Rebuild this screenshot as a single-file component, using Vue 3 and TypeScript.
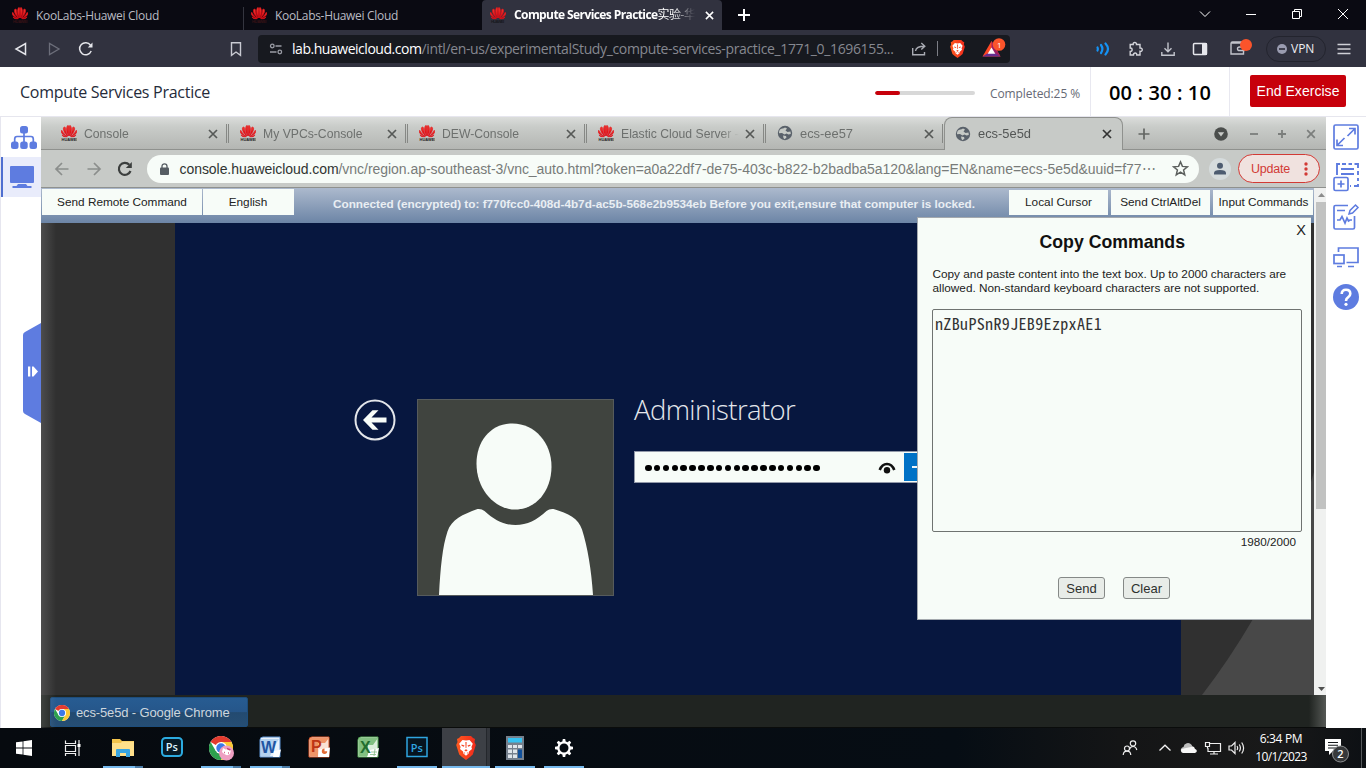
<script setup lang="ts">
interface RemoteTab {
  title: string
  brand: boolean
}
interface TaskItem {
  id: string
  running: boolean
  active?: boolean
}

const remoteTabs: RemoteTab[] = [
  { title: 'Console', brand: true },
  { title: 'My VPCs-Console', brand: true },
  { title: 'DEW-Console', brand: true },
  { title: 'Elastic Cloud Server -', brand: true },
  { title: 'ecs-ee57', brand: false },
]

const taskItems: TaskItem[] = [
  { id: 'explorer', running: true },
  { id: 'ps-new', running: false },
  { id: 'chrome', running: true },
  { id: 'word', running: true },
  { id: 'ppt', running: false },
  { id: 'excel', running: false },
  { id: 'ps-old', running: true },
  { id: 'brave', running: true, active: true },
  { id: 'calc', running: true },
  { id: 'settings', running: true },
]

const petals: string[] = [
  'M7.700 11C5.300 8 4.800 3 6.600 .6Q7.600 .2 7.800 1.600Z',
  'M8.300 11C10.700 8 11.200 3 9.400 .6Q8.400 .2 8.200 1.600Z',
  'M7 11C4.500 9.500 1.800 5.500 2.500 2.700Q3.200 1.600 4.300 2.400C4.600 6 5.500 8.500 7 11Z',
  'M9 11C11.500 9.500 14.200 5.500 13.500 2.700Q12.800 1.600 11.700 2.400C11.400 6 10.500 8.500 9 11Z',
  'M6.400 11.300C3 10.500 0 8.500 .1 6.200Q.2 5.300 1 5.400C2 7.800 4 9.800 6.400 11.300Z',
  'M9.600 11.300C13 10.500 16 8.500 15.900 6.200Q15.800 5.300 15 5.400C14 7.800 12 9.800 9.600 11.300Z',
  'M6.200 11.800C4 12.400 1.700 11.600 1 9.900C2.600 10.800 4.400 11.400 6.200 11.800Z',
  'M9.800 11.800C12 12.400 14.300 11.600 15 9.900C13.400 10.800 11.600 11.400 9.800 11.800Z',
]
const gearTeeth: number[] = [0, 45, 90, 135, 180, 225, 270, 315]
const command = 'nZBuPSnR9JEB9EzpxAE1'
const maxChars = 2000
</script>

<template>
  <svg class="sprite" width="0" height="0" aria-hidden="true">
    <defs>
      <linearGradient id="petal" x1="0" y1="0" x2="0" y2="1">
        <stop offset="0" stop-color="#f23a30" />
        <stop offset="1" stop-color="#dc000f" />
      </linearGradient>
      <linearGradient id="lion" x1="0" y1="0" x2="1" y2="0">
        <stop offset="0" stop-color="#ff5a1f" />
        <stop offset="1" stop-color="#f02a1c" />
      </linearGradient>
    </defs>
    <symbol id="flower" viewBox="0 0 16 12.500">
      <path v-for="d in petals" :key="d" :d="d" stroke="#e0101a" stroke-width=".6" />
    </symbol>
    <symbol id="globe" viewBox="0 0 16 16">
      <circle cx="8" cy="8" r="7.200" fill="#59616a" />
      <path d="M3 4.500C5 3 6 4 8 2.500L10 3.500L8.500 5.500L10.500 7L13.500 6.500L13.800 9L11.500 9.500L9.500 8.500L7.500 9.500L5 8L2 8.300C2 6.500 2.300 5.500 3 4.500Z" fill="#c5c9c5" />
      <path d="M6 10.500L9 11L9.500 12.500L7.500 14.300L6.500 13Z" fill="#c5c9c5" />
    </symbol>
    <symbol id="chrome" viewBox="0 0 24 24">
      <circle cx="12" cy="12" r="12" fill="#fff" />
      <path d="M1.600 6A12 12 0 0 0 12 24L17.200 15L12 12L6.800 15Z" fill="#2da04e" />
      <path d="M22.400 6A12 12 0 0 1 12 24L17.200 15L17 9L12 6Z" fill="#fcc934" />
      <path d="M12 12L1.600 6A12 12 0 0 1 22.400 6H12Z" fill="#e33b2e" />
      <circle cx="12" cy="12" r="6" fill="#fff" />
      <circle cx="12" cy="12" r="4.700" fill="#3d79e8" />
    </symbol>
    <symbol id="brave" viewBox="0 0 20 24">
      <path d="M5 0H15L17 2L19 3L18.500 6L19.800 9L16.800 18.500L14 21L10 24L6 21L3.200 18.500L.2 9L1.500 6L1 3L3 2Z" fill="url(#lion)" />
      <path d="M10 4.500L13.500 4L16.800 7.800L15.400 11L16 13L13 15.500L12.600 17.500L10 19.800L7.400 17.500L7 15.500L4 13L4.600 11L3.200 7.800L6.500 4Z" fill="#fff" />
      <path d="M5.500 8.500L8.500 9.500L7.800 10.700L5.500 9.800ZM14.500 8.500L11.500 9.500L12.200 10.700L14.500 9.800ZM8.300 14.200L10 13.200L11.700 14.200L10 15.500ZM7.600 16L9.200 17L8.500 17.800ZM12.400 16L10.800 17L11.500 17.800ZM9.400 6H10.600L10.400 12H9.600Z" fill="#f5431f" />
    </symbol>
    <symbol id="cross" viewBox="0 0 10 10">
      <path d="M1 1L9 9M9 1L1 9" fill="none" stroke="currentColor" stroke-width="1.700" />
    </symbol>
  </svg>

  <div class="screen">
    <header class="tabstrip">
      <div class="tab">
        <svg class="logo" viewBox="0 0 16 16"><use href="#flower" width="16" height="12.500" fill="url(#petal)" /><text x="1" y="15.700" class="logo-word dim">HUAWEI</text></svg>
        <span>KooLabs-Huawei Cloud</span>
      </div>
      <div class="tab second">
        <svg class="logo" viewBox="0 0 16 16"><use href="#flower" width="16" height="12.500" fill="url(#petal)" /><text x="1" y="15.700" class="logo-word dim">HUAWEI</text></svg>
        <span>KooLabs-Huawei Cloud</span>
      </div>
      <div class="tab current">
        <svg class="logo" viewBox="0 0 16 16"><use href="#flower" width="16" height="12.500" fill="url(#petal)" /><text x="1" y="15.700" class="logo-word">HUAWEI</text></svg>
        <span class="current-title">Compute Services Practice<span class="cjk">实验-华</span></span>
        <svg class="tab-close" viewBox="0 0 10 10"><use href="#cross" /></svg>
      </div>
      <svg class="new-tab" viewBox="0 0 12 12"><path d="M6 0V12M0 6H12" stroke="#fff" stroke-width="2" /></svg>
      <div class="window-controls">
        <svg width="12" height="12" viewBox="0 0 12 12"><path d="M1 3.500L6 8.500L11 3.500" /></svg>
        <svg width="12" height="12" viewBox="0 0 12 12"><path d="M1 6.500H11" /></svg>
        <svg width="12" height="12" viewBox="0 0 12 12"><path d="M1.500 3.500H8.500V10.500H1.500ZM3.500 3.500V1.500H10.500V8.500H8.500" /></svg>
        <svg width="12" height="12" viewBox="0 0 12 12"><path d="M1 1L11 11M11 1L1 11" /></svg>
      </div>
    </header>

    <nav class="toolbar">
      <svg width="16" height="16" viewBox="0 0 16 16" class="ln"><path d="M12.500 2.500V13.500L3 8Z" stroke="#e4e5ea" stroke-width="1.500" /></svg>
      <svg width="16" height="16" viewBox="0 0 16 16" class="ln"><path d="M3.500 2.500V13.500L13 8Z" stroke="#6c6e7a" stroke-width="1.300" /></svg>
      <svg width="16" height="16" viewBox="0 0 16 16" class="ln"><path d="M13.200 10A6 6 0 1 1 12.500 4.200" stroke="#e4e5ea" stroke-width="1.500" /><path d="M14.500 1.500V6.500H9.800Z" fill="#e4e5ea" /></svg>
      <i></i>
      <svg width="16" height="16" viewBox="0 0 16 16" class="ln"><path d="M3.500 1.700H12.500V14.300L8 11L3.500 14.300Z" stroke="#c9cad2" stroke-width="1.400" /></svg>
      <i></i>
      <div class="address">
        <svg class="tune ln" width="14" height="14" viewBox="0 0 14 14"><g stroke="#9a9ca5" stroke-width="1.300"><circle cx="3.300" cy="4" r="1.800" /><path d="M6.500 4H12.500M1 10H7.500" /><circle cx="10.800" cy="10" r="1.800" /></g></svg>
        <span class="host">lab.huaweicloud.com</span><span class="path">/intl/en-us/experimentalStudy_compute-services-practice_1771_0_1696155...</span>
        <svg class="share ln" width="16" height="16" viewBox="0 0 16 16"><path d="M1.700 7V13.700H13.500V11M4.500 10C5 6.500 8 5.200 13.500 5.200M10.300 2L13.800 5.200L10.300 8.400" stroke="#a9abb3" stroke-width="1.400" /></svg>
        <span class="divider"></span>
        <svg class="shield" viewBox="0 0 20 24"><use href="#brave" /></svg>
        <svg class="bat" viewBox="0 0 26 20"><path d="M9.500 3L18.500 18.500H0.500Z" fill="#ff4724" /><path d="M9.500 3L18.500 18.500L9.500 14Z" fill="#9e1f63" /><path d="M.5 18.500H18.500L9.500 13Z" fill="#662d91" /><path d="M9.500 9.500L13.300 15.800H5.700Z" fill="#fff" /><circle cx="17" cy="6.500" r="6.300" fill="#fb542b" /><text x="15" y="10" fill="#fff" class="bat-count">1</text></svg>
      </div>
      <i></i>
      <svg width="16" height="16" viewBox="0 0 16 16" class="ln"><g stroke="#1593f5" stroke-width="2.200" stroke-linecap="round"><path d="M2.500 6.500Q3.300 8 2.500 9.500" /><path d="M6 4Q8.800 8 6 12" /><path d="M10.500 2.500Q15.500 8 10.500 13.500" /></g></svg>
      <svg width="16" height="16" viewBox="0 0 16 16" class="ln"><path d="M2.200 3.500H5.200C4.500 1 9 .6 8.500 3.500H12V7C15 6.500 15 11 12 10.300V14H8.800C9 11.300 5.500 11.300 5.500 14H2.200V10.500C4.800 10.500 4.800 7 2.200 7Z" stroke="#d3d4da" stroke-width="1.400" /></svg>
      <svg width="16" height="16" viewBox="0 0 16 16" class="ln"><path d="M8 1.500V10.500M4.500 7.200L8 10.700L11.500 7.200M1.800 11V14.200H14.200V11" stroke="#c3c5cd" stroke-width="1.400" /></svg>
      <svg width="16" height="16" viewBox="0 0 16 16"><rect x="1.500" y="2.500" width="13" height="11" rx="1" fill="none" stroke="#e6e7ec" stroke-width="1.500" /><path d="M10 2H15V14H10Z" fill="#e6e7ec" /></svg>
      <svg width="26" height="22" viewBox="0 0 26 22" class="ln wallet"><path d="M3.800 6H15.500V17H3V6.500Q3 5 4.500 5H15M16 10H11.500Q9.500 10 9.500 11.800T11.500 13.500H16Z" stroke="#c3c5cd" stroke-width="1.400" /><circle cx="18" cy="8" r="6" fill="#fb542b" /></svg>
      <i></i>
      <div class="vpn"><svg width="10" height="10" viewBox="0 0 10 10"><circle cx="5" cy="5" r="5" fill="#9a9cb0" /><path d="M2 5H8" stroke="#31323f" stroke-width="1.700" /></svg><span>VPN</span></div>
      <svg width="14" height="12" viewBox="0 0 14 12"><path d="M.5 1.500H13.500M.5 6H13.500M.5 10.500H13.500" stroke="#cfd0d6" stroke-width="1.500" /></svg>
    </nav>

    <section class="lab-header">
      <h1>Compute Services Practice</h1>
      <div class="progress"><span class="bar"><b></b></span><span>Completed:25 %</span></div>
      <div class="timer">00 : 30 : 10</div>
      <div class="end"><button>End Exercise</button></div>
    </section>

    <main class="lab">
      <aside class="left">
        <div class="cell"><svg width="28" height="26" viewBox="0 0 28 26"><g fill="#5e7ce0"><rect x="10" y="1" width="8" height="7.500" rx="2.500" /><rect x="1" y="16.500" width="7.500" height="7.500" rx="2.500" /><rect x="10.200" y="16.500" width="7.500" height="7.500" rx="2.500" /><rect x="19.500" y="16.500" width="7.500" height="7.500" rx="2.500" /></g><path d="M14 8V17M4.700 17V14Q4.700 11.500 7 11.500H21Q23.300 11.500 23.300 14V17" fill="none" stroke="#5e7ce0" stroke-width="1.700" /></svg></div>
        <div class="cell on"><svg width="24" height="24" viewBox="0 0 24 24" fill="#5e7ce0"><rect y="1" width="24" height="17" rx="1" /><path d="M8 19H16L17.500 21H21.500V23H2.500V21H6.500Z" /></svg></div>
        <svg class="handle" width="18" height="100" viewBox="0 0 18 100"><path d="M18 0V100L2 91Q0 90 0 88V12Q0 10 2 9Z" fill="#5e7ce0" /><path d="M5 43.500H7.300V53.500H5ZM9 43.500H10.500L15 48.500L10.500 53.500H9Z" fill="#fff" /></svg>
      </aside>

      <section class="remote">
        <div class="r-tabs">
          <div v-for="tab in remoteTabs" :key="tab.title" class="r-tab" :class="{ site: !tab.brand }">
            <svg v-if="tab.brand" class="logo" viewBox="0 0 16 16"><use href="#flower" width="16" height="12.500" fill="url(#petal)" /><text x=".5" y="16" class="logo-word dark">HUAWEI</text></svg>
            <svg v-else class="logo" viewBox="0 0 16 16"><use href="#globe" /></svg>
            <span class="r-title">{{ tab.title }}</span>
            <svg class="r-close" viewBox="0 0 10 10"><use href="#cross" /></svg>
          </div>
          <div class="r-tab site r-current">
            <svg class="logo" viewBox="0 0 16 16"><use href="#globe" /></svg>
            <span class="r-title">ecs-5e5d</span>
            <svg class="r-close" viewBox="0 0 10 10"><use href="#cross" /></svg>
          </div>
          <svg class="r-new" viewBox="0 0 12 12"><path d="M6 .5V11.500M.5 6H11.500" stroke="#636663" stroke-width="1.700" /></svg>
          <div class="r-controls">
            <svg width="14" height="14" viewBox="0 0 14 14"><circle cx="7" cy="7" r="6.800" fill="#4b4e4c" /><path d="M3.800 5.200H10.200L7 9.500Z" fill="#c9cbc8" /></svg>
            <svg width="10" height="10" viewBox="0 0 10 10"><path d="M1 5H9" stroke="#7b7e7c" stroke-width="1.800" /></svg>
            <svg width="10" height="10" viewBox="0 0 10 10"><path d="M1 5H9M5 1V9" stroke="#7b7e7c" stroke-width="1.800" /></svg>
            <svg width="10" height="10" viewBox="0 0 10 10"><path d="M1.200 1.200L8.800 8.800M8.800 1.200L1.200 8.800" stroke="#7b7e7c" stroke-width="1.700" /></svg>
          </div>
        </div>

        <div class="r-bar">
          <svg width="16" height="16" viewBox="0 0 16 16" class="ln"><path d="M14.500 8H2M8 2L2 8L8 14" stroke="#8b8e8c" stroke-width="1.700" /></svg>
          <svg width="16" height="16" viewBox="0 0 16 16" class="ln"><path d="M1.500 8H14M8 2L14 8L8 14" stroke="#8b8e8c" stroke-width="1.700" /></svg>
          <svg width="16" height="16" viewBox="0 0 16 16" class="ln"><path d="M13.500 10A6 6 0 1 1 12.300 3.800" stroke="#3c3f3e" stroke-width="2.200" /><path d="M14.800 1V7H8.800Z" fill="#3c3f3e" /></svg>
          <div class="omni">
            <svg class="lock" viewBox="0 0 9 12"><rect y="4.500" width="9" height="7.500" rx="1" fill="#565d63" /><path d="M2 5V3.300A2.500 2.500 0 0 1 7 3.300V5" fill="none" stroke="#565d63" stroke-width="1.300" /></svg>
            <span class="o-host">console.huaweicloud.com</span><span class="o-path">/vnc/region.ap-southeast-3/vnc_auto.html?token=a0a22df7-de75-403c-b822-b2badba5a120&amp;lang=EN&amp;name=ecs-5e5d&amp;uuid=f77⋯</span>
            <svg class="star ln" viewBox="0 0 16 16"><path d="M8 1.800L9.800 6L14.500 6.400L10.900 9.400L12 14L8 11.500L4 14L5.100 9.400L1.500 6.400L6.200 6Z" stroke="#5c605e" stroke-width="1.400" /></svg>
          </div>
          <svg class="person" viewBox="0 0 22 22"><circle cx="11" cy="11" r="11" fill="#d6dcdd" /><circle cx="11" cy="7.800" r="3" fill="#4d5c70" /><path d="M5 16.500V15Q5 12 11 12T17 15V16.500Z" fill="#4d5c70" /></svg>
          <div class="update"><span>Update</span><svg width="4" height="14" viewBox="0 0 4 14" fill="#d23a35"><circle cx="2" cy="2" r="1.700" /><circle cx="2" cy="7" r="1.700" /><circle cx="2" cy="12" r="1.700" /></svg></div>
        </div>

        <div class="r-page">
          <div class="canvas">
            <div class="vnc">
              <button class="v-send">Send Remote Command</button>
              <button class="v-lang">English</button>
              <p>Connected (encrypted) to: f770fcc0-408d-4b7d-ac5b-568e2b9534eb Before you exit,ensure that computer is locked.</p>
              <button class="v-r">Local Cursor</button>
              <button class="v-r">Send CtrlAltDel</button>
              <button class="v-r">Input Commands</button>
            </div>
            <div class="desk">
              <div class="login">
                <svg class="back" viewBox="0 0 42 42"><circle cx="21" cy="21" r="19.500" fill="none" stroke="#e3e6ea" stroke-width="2" /><path d="M9 21L18.500 11.300H24.500L17.500 18.500H32.500V23.500H17.500L24.500 30.700H18.500Z" fill="#f7fcf8" /></svg>
                <svg class="avatar" viewBox="0 0 197 197"><rect x=".5" y=".5" width="196" height="196" fill="#40443f" stroke="#565b5c" /><path d="M95.500 24.500C118.500 24.500 134.500 44.500 134.500 67.500C134.500 92.500 118.500 110.500 98.500 110.500C77.500 110.500 59.500 90.500 59.500 64.500C59.500 42.500 73.500 24.500 95.500 24.500Z" fill="#f7fcf8" /><path d="M22 196C23.500 168 25.500 147.500 30.500 132.500C34.500 120.500 45.500 115.500 60.500 110Q64.500 109.500 67.500 112C77.500 121 86.500 126 98.500 126C110.500 126 119.500 121 129.500 112Q132.500 109.500 136.500 110C151.500 114.500 161.500 119.500 165 130.500C170.500 147.500 174.500 171.500 176 196Z" fill="#f7fcf8" /></svg>
                <div class="creds">
                  <h2>Administrator</h2>
                  <div class="pwd"><span class="dots"><i v-for="n in command.length" :key="n"></i></span><svg class="eye" viewBox="0 0 18 12"><path d="M1.700 8Q4 2 9 2T16.300 8" fill="none" stroke="#111" stroke-width="2.600" /><circle cx="9" cy="8.300" r="3.200" fill="#111" /></svg><span class="go"><svg width="26" height="26" viewBox="0 0 26 26"><path d="M7 13H19M14 7L20 13L14 19" fill="none" stroke="#eef6fb" stroke-width="2.200" /></svg></span></div>
                </div>
              </div>
              <svg class="hill" viewBox="0 0 133 473"><path d="M133 250Q105 345 72 397Q48 438 21 473H133Z" fill="#484848" /></svg>
            </div>
            <div class="dialog">
              <span class="x">X</span>
              <h3>Copy Commands</h3>
              <p>Copy and paste content into the text box. Up to 2000 characters are<br>allowed. Non-standard keyboard characters are not supported.</p>
              <div class="box">{{ command }}</div>
              <div class="count">{{ maxChars - command.length }}/{{ maxChars }}</div>
              <div class="actions"><button>Send</button><button>Clear</button></div>
            </div>
          </div>
          <div class="scroll"><svg viewBox="0 0 12 14"><path d="M4 9H11L7.500 5Z" fill="#8c8c8c" /></svg><b></b><svg viewBox="0 0 12 14"><path d="M4 6H11L7.500 10Z" fill="#505050" /></svg></div>
        </div>

        <div class="r-task"><div class="r-app"><svg viewBox="0 0 24 24"><use href="#chrome" /></svg><span>ecs-5e5d - Google Chrome</span></div></div>
        <div class="glow"></div>
      </section>

      <aside class="right">
        <svg viewBox="0 0 26 26"><rect x="1" y="1" width="24" height="24" rx="1.500" /><path d="M16 4.500H22V10.500M22 4.500L14.500 12M10 21.500H4V15.500M4 21.500L11.500 14" /></svg>
        <svg viewBox="0 0 26 26"><path d="M4 11V0H7M9 0H13M15.500 0H19M21.500 0H25V4M25 7V11M25 14V17M25 20V22H21M18 22H17M8 5H21M8 10H21" stroke-width="1.900" /><rect x="1" y="13.500" width="14" height="13" rx="1.500" /><path d="M8 16.500V23.500M4.500 20H11.500" /></svg>
        <svg viewBox="0 0 26 26"><path d="M15 1.500H2.500Q1 1.500 1 3V23.500Q1 25 2.500 25H20Q21.500 25 21.500 23.500V12M4 6.500H12M4 16H7L9 12.500L12 19L14 14L15.500 17L17 16H19" /><path d="M16 10L17 6.500L22.500 1L25 3.500L19.500 9Z" stroke-width="1.500" /></svg>
        <svg viewBox="0 0 26 26"><path d="M5.500 8V4H25V18.500H13.500M15 22.500H21M4 22.500H9" /><rect x="1" y="11" width="10" height="8.500" /></svg>
        <svg viewBox="0 0 26 26"><circle cx="13" cy="13" r="13" fill="#5e7ce0" stroke="none" /><path d="M8.700 10Q8.700 5.800 13 5.800T17.300 9.800Q17.300 12 15 13.400Q13 14.600 13 17" stroke="#fff" stroke-width="2.600" /><circle cx="13" cy="20.300" r="1.600" fill="#fff" stroke="none" /></svg>
      </aside>
    </main>

    <footer class="taskbar">
      <div class="slot"><svg width="16" height="16" viewBox="0 0 16 16" fill="#fff"><path d="M0 2.300L6.600 1.400V7.600H0ZM7.400 1.300L16 0V7.600H7.400ZM0 8.400H6.600V14.600L0 13.700ZM7.400 8.400H16V16L7.400 14.700Z" /></svg></div>
      <div class="slot"><svg width="17" height="16" viewBox="0 0 17 16" class="ln"><path d="M1.500 .5V3.500H11.500V.5M1.500 5.500H11.500V11.500H1.500ZM1.500 16V13.500H11.500V16M15 0V16" stroke="#eee" stroke-width="1.200" /><path d="M13.500 4H16.500V7H13.500Z" fill="#fff" /></svg></div>
      <div v-for="t in taskItems" :key="t.id" class="slot" :class="{ running: t.running, active: t.active }">
        <svg v-if="t.id === 'explorer'" width="22" height="20" viewBox="0 0 22 20"><path d="M0 1H8L10 3H22V18H0Z" fill="#f3c44b" /><path d="M0 5L9 5L10 3.500H22V18H0Z" fill="#ffe08a" /><path d="M4 19V12Q4 11 5 11H17Q18 11 18 12V19H14V15H8V19Z" fill="#3aa5e0" /></svg>
        <svg v-else-if="t.id === 'ps-new'" width="22" height="20" viewBox="0 0 22 20" class="raise"><rect x="1" y="1" width="20" height="18" rx="3.500" fill="#071a26" stroke="#2cabe0" stroke-width="2" /><text x="4.700" y="14.300" class="ps">Ps</text></svg>
        <svg v-else-if="t.id === 'chrome'" width="28" height="26" viewBox="0 0 28 26"><use href="#chrome" x="2" y="1" width="24" height="24" /><circle cx="19.500" cy="18" r="7.500" fill="#ee9fc2" /><path d="M15 17L16 13L18.500 14.500L21.500 13.500L24 15L23 19Q19 22 15 17Z" fill="#fff" /><path d="M20 13.500L23.500 15M17 17.500H17.800M21 18H21.800" stroke="#cc3f72" stroke-width="1.500" /></svg>
        <svg v-else-if="t.id === 'word'" width="22" height="22" viewBox="0 0 22 22" class="raise"><path d="M4 1H21V21H1V4Q1 1 4 1Z" fill="#e8f0fa" stroke="#5c94d4" /><path d="M2 3H20L17 8L11 20H2Z" fill="#b4d2f0" /><text x="2" y="17" class="office" fill="#1f55a3">W</text><path d="M15 15L22 13.500L20 21H14Z" fill="#fff" /></svg>
        <svg v-else-if="t.id === 'ppt'" width="22" height="22" viewBox="0 0 22 22" class="raise"><path d="M4 1H21V21H1V4Q1 1 4 1Z" fill="#fae2d4" stroke="#d65325" /><path d="M2 2H21L17 7H10V20H2Z" fill="#ef9467" /><path d="M11 13.500L22 11.500L21 21H10Z" fill="#fff" /><text x="3" y="16" class="office" fill="#bd3514">P</text><path d="M16.500 12.500A2.700 2.700 0 1 0 19.200 15.200H16.500Z" fill="#e36c36" /></svg>
        <svg v-else-if="t.id === 'excel'" width="22" height="22" viewBox="0 0 22 22" class="raise"><path d="M4 1H21V21H1V4Q1 1 4 1Z" fill="#dceedb" stroke="#51a351" /><path d="M2 2H21L16 9H11V20H2Z" fill="#82c081" /><path d="M13 14L22 12L20 21H10Z" fill="#fff" /><text x="3" y="16.500" class="office" fill="#226e30">X</text><path d="M14 16H20M13 18.500H19M18 13L17 20" stroke="#87bd87" stroke-width=".8" /></svg>
        <svg v-else-if="t.id === 'ps-old'" width="22" height="22" viewBox="0 0 22 22" class="raise"><rect x="1" y="1.500" width="20" height="19" fill="#06141f" stroke="#2fa5e0" stroke-width="1.500" /><text x="4.700" y="15.500" class="ps blue">Ps</text></svg>
        <svg v-else-if="t.id === 'brave'" width="20" height="24" viewBox="0 0 20 24"><use href="#brave" /></svg>
        <svg v-else-if="t.id === 'calc'" width="18" height="24" viewBox="0 0 18 24"><rect width="18" height="24" fill="#75808d" /><rect x="2" y="2" width="14" height="4.500" fill="#35c1f1" /><g fill="#dfe5eb"><path d="M2 9H6V12H2ZM7 9H11V12H7ZM12 9H16V12H12ZM2 13.500H6V17H2ZM7 13.500H11V17H7ZM2 18.500H6V22H2ZM7 18.500H11V22H7Z" /></g><rect x="12" y="13.500" width="4" height="8.500" fill="#10509b" /></svg>
        <svg v-else width="20" height="20" viewBox="0 0 20 20"><circle cx="10" cy="10" r="5.600" fill="none" stroke="#fff" stroke-width="2.200" /><path v-for="a in gearTeeth" :key="a" d="M8.300 4L8.800 1H11.200L11.700 4Z" fill="#fff" :transform="`rotate(${a} 10 10)`" /></svg>
      </div>
      <div class="tray">
        <svg width="16" height="16" viewBox="0 0 16 16" class="ln"><g stroke="#eee" stroke-width="1.200"><circle cx="11" cy="3.500" r="2.700" /><path d="M7.500 9.500Q8 6.500 11 6.500T14.800 10" /><circle cx="5" cy="8.500" r="2.500" /><path d="M1.200 15Q1.500 11.200 5 11.200T8.800 15" /></g></svg>
        <svg width="14" height="8" viewBox="0 0 14 8" class="ln"><path d="M1.500 6.500L7 1.200L12.500 6.500" stroke="#f2f2f2" stroke-width="1.300" /></svg>
        <svg width="18" height="12" viewBox="0 0 18 12"><path d="M1 9A3 3 0 0 1 3.500 5A4.500 4.500 0 0 1 11.500 2.800L13 5.500L6 10Z" fill="#bdbdbd" /><path d="M3 11Q0 10 1.500 7L6 6L11 5Q14 3.500 15 7Q17.500 8 16.500 10L15 11Z" fill="#f7f7f7" /></svg>
        <svg width="18" height="14" viewBox="0 0 18 14" class="ln"><path d="M6 2.500H16.500V10.500H4V7M10 10.500V13M6 13H14M1.500 1.500H5.500V5.500H1.500ZM3.500 5.500V7.500" stroke="#eee" stroke-width="1.200" /></svg>
        <svg width="18" height="14" viewBox="0 0 18 14" class="ln"><path d="M1 5H3.500L7 1.500V12.500L3.500 9H1ZM9 5Q10.300 7 9 9M11.300 3.500Q13.500 7 11.300 10.500M13.700 1.500Q17.500 7 13.700 12.500" stroke="#eee" stroke-width="1.200" /></svg>
        <div class="clock"><span>6:34 PM</span><span class="date">10/1/2023</span></div>
        <svg class="notes" width="26" height="26" viewBox="0 0 26 26"><path d="M1 2H17V14H9L5 18V14H1Z" fill="#fff" /><path d="M4 5.500H14M4 8.200H14M4 11H14" stroke="#15181b" stroke-width="1.100" /><circle cx="16.500" cy="17" r="8" fill="#36383a" stroke="#8d8f91" /><text x="13.200" y="21" class="note-count">2</text></svg>
        <span class="peek"></span>
      </div>
    </footer>
  </div>
</template>

<style>
body { margin: 0; overflow: hidden; }
</style>

<style scoped>
.sprite { position: absolute; }
.screen { width: 1366px; height: 768px; display: flex; flex-direction: column; overflow: hidden; background: #fff; font-family: "Open Sans", "Noto Sans", "Noto Sans CJK SC", sans-serif; }
svg { display: block; flex: none; }
button { font: inherit; padding: 0; margin: 0; border: 0; white-space: nowrap; }
h1, h2, h3, p { margin: 0; font-weight: 400; white-space: nowrap; }
.ln { fill: none; }
.logo { width: 16px; height: 16px; }
.logo-word { font: 700 4px "Liberation Sans", sans-serif; fill: #17181d; }
.logo-word.dim { fill: #3a1216; }
.logo-word.dark { fill: #222; }

.tabstrip { height: 30px; flex: none; background: #0a0a12; display: flex; align-items: center; color: #b9bac2; font-size: 12px; letter-spacing: -.31px; }
.tab { width: 231px; height: 30px; box-sizing: border-box; display: flex; align-items: center; gap: 8px; padding-left: 12px; white-space: nowrap; }
.second { width: 239px; margin-left: 12px; padding-left: 7px; height: 23px; margin-top: 7px; border-left: 1px solid #34353f; }
.second .logo { margin-top: -7px; }
.second span { margin-top: -7px; }
.current { width: 240px; padding-left: 8px; background: #31323f; color: #fff; border-radius: 4px 4px 0 0; font-weight: 700; letter-spacing: -.59px; }
.current-title { width: 181px; line-height: 18px; overflow: hidden; -webkit-mask-image: linear-gradient(90deg, #000 158px, transparent 181px); mask-image: linear-gradient(90deg, #000 158px, transparent 181px); }
.cjk { font-family: "Noto Sans CJK SC", sans-serif; font-weight: 400; line-height: 1; }
.tab-close { width: 9px; height: 9px; margin-left: 2px; }
.new-tab { width: 12px; height: 12px; margin-left: 16px; }
.window-controls { display: grid; grid-template-columns: repeat(4, 46px); justify-items: center; margin-left: auto; margin-top: -3px; }
.window-controls path { fill: none; stroke: #fff; stroke-width: 1; }

.toolbar { height: 37px; flex: none; background: #31323f; display: grid; align-items: center; justify-items: center; grid-template-columns: 42px 24px 40px 114px 32px 6px 752px 77px 32px 33px 32px 32px 46px 4px 60px 36px; }
.wallet { margin-left: 4px; margin-top: -1px; }
.address { justify-self: stretch; height: 28px; background: #17191f; border-radius: 4px; display: flex; align-items: center; font-size: 14px; white-space: nowrap; }
.tune { margin: 0 9px 0 11px; }
.host { width: 129.500px; color: #fff; letter-spacing: -.465px; }
.path { width: 472px; color: #868890; letter-spacing: -.36px; }
.share { margin-left: 17px; }
.divider { width: 1px; height: 15px; background: #7c7e86; margin-left: 10px; }
.shield { width: 15px; height: 18px; margin-left: 12px; }
.bat { width: 26px; height: 20px; margin: -2px 0 0 17px; }
.bat-count { font: 8px "Open Sans", sans-serif; }
.vpn { width: 60px; height: 26px; box-sizing: border-box; border: 1px solid #23242e; border-radius: 13px; display: flex; align-items: center; padding-left: 10px; gap: 4px; color: #eeeef2; font-size: 12px; }

.lab-header { height: 49px; flex: none; background: #fff; border-bottom: 1px solid #e6e6ee; display: flex; align-items: stretch; }
h1 { width: 190px; margin-left: 20px; font-size: 16px; line-height: 51px; letter-spacing: -.273px; color: #252b3a; }
.progress { display: flex; align-items: center; margin-left: auto; padding-top: 3px; width: 215px; font-size: 12px; letter-spacing: -.09px; color: #666a75; gap: 15px; white-space: nowrap; }
.bar { width: 100px; height: 4px; border-radius: 2px; background: #d8d8d8; overflow: hidden; }
.bar b { display: block; width: 25px; height: 4px; border-radius: 2px; background: #c7000b; }
.timer { width: 138px; border: solid #e8e8f0; border-width: 0 1px; text-align: center; font-size: 20px; line-height: 51px; font-weight: 600; letter-spacing: .137px; color: #000; white-space: nowrap; }
.end { width: 136px; display: flex; justify-content: center; align-items: center; }
.end button { width: 96px; height: 32px; margin-top: -1px; background: #c7000b; color: #fff; border-radius: 2px; font: 14px "Liberation Sans", Arial, sans-serif; letter-spacing: .04px; }

.lab { height: 611px; flex: none; display: flex; }
.left { width: 41px; box-sizing: border-box; border-left: 1px solid #e6e6ef; display: flex; flex-direction: column; }
.cell { height: 40px; display: flex; align-items: center; justify-content: center; }
.cell.on { background: #e9ecfb; border-left: 2px solid #4f6fd0; }
.cell:first-child svg { margin-top: 2px; margin-left: 5px; }
.handle { margin: 126px 0 0 22px; }
.right { width: 40px; display: flex; flex-direction: column; align-items: center; gap: 14px; padding-top: 7px; box-sizing: border-box; }
.right svg { width: 26px; height: 26px; overflow: visible; fill: none; stroke: #5e7ce0; stroke-width: 1.700; }

.remote { width: 1285px; position: relative; font-family: "Liberation Sans", Arial, sans-serif; background: #202421; }
.glow { position: absolute; top: 106px; bottom: 0; left: 0; width: 15px; background: linear-gradient(90deg, rgba(255,255,255,.14), transparent); pointer-events: none; }
.r-tabs { height: 33px; box-sizing: border-box; border-bottom: 1px solid #8f918e; padding-left: 8px; display: flex; align-items: center; background: linear-gradient(#dbdddb, #c9ccc9 30%, #b4b6b3); }
.r-tab { width: 179px; height: 32px; box-sizing: border-box; padding: 1px 10px 0 12px; display: flex; align-items: center; color: #6d706e; font-size: 12.200px; position: relative; }
.r-tab .logo { margin-top: -1px; }
.r-tab:not(.r-current)::after { content: ""; position: absolute; right: -1px; top: 7px; width: 1px; height: 19px; border-left: 1px solid #868885; border-right: 1px solid #868885; }
.r-title { width: 118px; margin-left: 7px; overflow: hidden; white-space: nowrap; -webkit-mask-image: linear-gradient(90deg, #000 100px, transparent 118px); mask-image: linear-gradient(90deg, #000 100px, transparent 118px); line-height: 16px; }
.site .r-title { font-size: 12.900px; }
.r-close { width: 10px; height: 10px; margin-left: 6px; color: #565957; }
.r-current { height: 33px; background: #c7cac7; border: 1px solid #8f918e; border-bottom: 0; border-radius: 8px 8px 0 0; color: #535655; margin-top: 1px; padding: 0 10px; }
.r-current .r-close { color: #333; }
.r-new { width: 12px; height: 12px; margin-left: 15px; margin-top: 1px; }
.r-controls { margin-left: auto; display: grid; grid-template-columns: 38px 28px 28px 30px; justify-items: center; align-items: center; margin-top: 1px; }
.r-bar { height: 38px; box-sizing: border-box; background: #c7cac7; display: flex; align-items: center; padding-left: 13px; border-bottom: 1px solid #8f918e; }
.r-bar > svg:nth-child(2) { margin-left: 16px; }
.r-bar > svg:nth-child(3) { margin-left: 15px; }
.omni { width: 1052px; height: 28px; margin-left: 14px; border-radius: 14px; background: #f7fcf8; display: flex; align-items: center; font-size: 14px; white-space: nowrap; }
.lock { width: 9px; height: 12px; margin-left: 13px; }
.o-host { width: 159px; margin-left: 10.500px; color: #303432; letter-spacing: -.057px; }
.o-path { width: 817px; color: #777b79; letter-spacing: -.036px; }
.star { width: 17px; height: 17px; margin-left: 16px; }
.r-bar .person { width: 22px; height: 22px; margin-left: 10px; }
.update { width: 82px; height: 29px; box-sizing: border-box; margin-left: 7px; border: 1px solid #d23a35; border-radius: 15px; background: #f0e2df; color: #d23a35; font-size: 12.500px; letter-spacing: -.2px; display: flex; align-items: center; padding-left: 12px; }
.update svg { margin-left: 14px; }

.r-page { height: 507px; display: flex; }
.canvas { width: 1273px; position: relative; }
.vnc { height: 35px; box-sizing: border-box; background: linear-gradient(#acb9cd, #6c85a6); display: flex; padding: 1px 1px 0 1px; gap: 1px; }
.vnc button { background: #f7fcf8; color: #222; font-size: 11.800px; }
.vnc .v-send { width: 160px; height: 26px; }
.vnc .v-lang { width: 91px; height: 26px; padding-right: 1px; }
.vnc p { flex: 1; padding-left: 5px; text-align: center; font-weight: 700; font-size: 11.780px; line-height: 29px; color: #e9eef3; }
.vnc .v-r { width: 99px; height: 25px; margin: 1px 2px 0 0; padding-bottom: 2px; }
.vnc .v-r:last-child { width: 100px; margin-right: 0; padding-left: 1px; }
.desk { height: 472px; background: #303030; position: relative; padding-left: 134px; }
.login { width: 1006px; height: 472px; background: #07173f; display: flex; }
.back { width: 42px; height: 42px; margin: 176px 0 0 179px; }
.avatar { width: 197px; height: 197px; margin: 176px 0 0 21px; }
.creds { margin: 171px 0 0 20px; }
h2 { font: 300 27.500px/32px "Open Sans", sans-serif; letter-spacing: -.62px; color: #e4e7ec; height: 57px; }
.pwd { width: 302px; height: 32px; box-sizing: border-box; background: #f7fcf8; border: 1px solid #9299a9; display: flex; align-items: center; padding-left: 10px; }
.dots { display: flex; gap: 2.360px; width: 233px; margin-top: 2px; }
.dots i { width: 6.500px; height: 6.500px; border-radius: 50%; background: #000; }
.eye { width: 18px; height: 12px; margin-top: 1px; }
.go { width: 28px; height: 28px; margin-left: 8px; background: #0072c6; display: flex; align-items: center; justify-content: center; }
.hill { position: absolute; right: 0; bottom: 0; width: 133px; height: 473px; }
.dialog { position: absolute; left: 876px; top: 29px; width: 394px; height: 403px; box-sizing: border-box; border: 1px solid #a4a9ae; border-width: 1px 0 1px 1px; background: #f7fcf8; padding: 14px 9px 0 14.500px; color: #222; }
.x { position: absolute; right: 5px; top: 4px; font-size: 14.500px; line-height: 16px; }
h3 { font-weight: 700; font-size: 17.700px; line-height: 20px; text-align: center; color: #111; padding-right: 10px; }
.dialog p { margin-top: 15px; font-size: 11.790px; line-height: 14px; }
.box { height: 223px; box-sizing: border-box; border: 1px solid #6f7371; border-radius: 2px; margin-top: 14px; margin-left: -.5px; padding: 2px 2px; font: 16px/22px "Noto Sans Mono CJK SC", "DejaVu Sans Mono", monospace; letter-spacing: .35px; color: #333; }
.count { text-align: right; padding-right: 6px; font-size: 11.700px; line-height: 14px; margin-top: 3px; }
.actions { display: flex; gap: 18px; padding-left: 125.500px; margin-top: 28px; }
.actions button { width: 47px; height: 22px; box-sizing: border-box; border: 1px solid #858987; border-radius: 3px; background: #e8ece8; font-size: 13px; color: #2d302e; }
.scroll { width: 12px; background: #f0f1f0; display: flex; flex-direction: column; align-items: stretch; }
.scroll svg { width: 12px; height: 14px; }
.scroll b { height: 307px; margin: 0 0 auto 2px; background: #c1c2c1; }
.r-task { height: 33px; box-sizing: border-box; background: linear-gradient(90deg, #202421 1268px, #555855); padding: 2px 9px 0; border-bottom: 1px solid #0a0c0b; }
.r-app { width: 198px; height: 30px; box-sizing: border-box; border: 1px solid #1d4d7c; border-radius: 2px; background: linear-gradient(#275c92, #26568a 50%, #234a70 52%, #264e74); display: flex; align-items: center; gap: 6px; padding: 1px 0 0 3px; color: #cdd6dd; font-size: 13px; letter-spacing: -.137px; white-space: nowrap; }
.r-app svg { width: 16px; height: 16px; }

.taskbar { height: 40px; flex: none; display: flex; background: linear-gradient(90deg, #060a0f, #060d14 70%, #141516 82%, #191919 93%, #0d1014); }
.slot { width: 49px; height: 40px; box-sizing: border-box; display: flex; align-items: center; justify-content: center; position: relative; }
.slot:nth-child(-n+2) { width: 48px; }
.slot:nth-child(3) { margin-left: 2px; }
.slot .raise { margin-top: -2px; }
.running::after { content: ""; position: absolute; left: 5px; bottom: 0; width: 40px; height: 2px; background: linear-gradient(90deg, #76b9ed 32px, #4b7ba5 32px); }
.running:nth-child(n+9)::after { background: #76b9ed; }
.slot.active { background: linear-gradient(90deg, #3d4046 44px, #24272c 44px, #24272c 45px, #33363c 45px); margin: 0 0 0 1px; width: 48px; }
.slot.active::after { left: 0; width: 48px; background: #76b9ed; }
.ps { font: 600 11px "Open Sans", sans-serif; fill: #dff3fb; }
.ps.blue { fill: #2fa5e0; }
.office { font: 700 16px "Liberation Sans", sans-serif; }
.tray { margin-left: auto; margin-right: 4px; display: flex; align-items: center; }
.tray > svg:nth-child(2) { margin-left: 20px; }
.tray > svg:nth-child(3) { margin-left: 8px; }
.tray > svg:nth-child(4) { margin-left: 6px; }
.tray > svg:nth-child(5) { margin-left: 6px; }
.clock { width: 58px; margin-left: 6px; display: flex; flex-direction: column; align-items: center; color: #fff; font-size: 12px; line-height: 18px; letter-spacing: -.34px; white-space: nowrap; }
.date { letter-spacing: -.6px; }
.notes { margin: 3px 0 0 14px; }
.note-count { font: 600 11px "Open Sans", sans-serif; fill: #fff; }
.peek { width: 1px; height: 40px; background: #55585b; margin-left: 11px; }
</style>
